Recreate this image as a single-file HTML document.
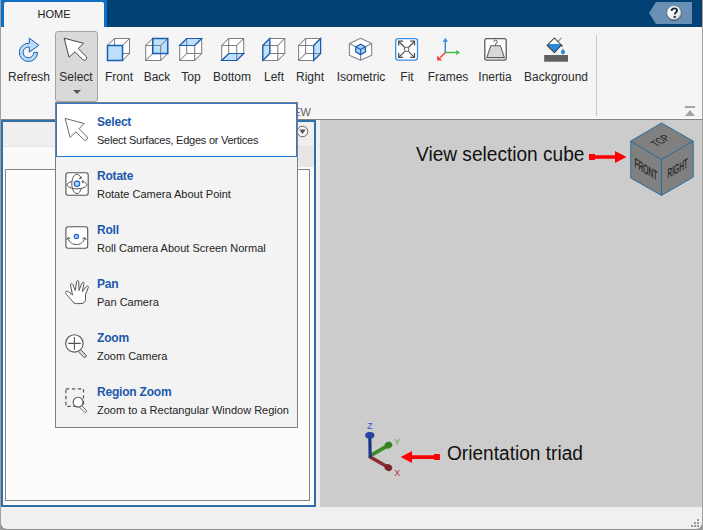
<!DOCTYPE html>
<html><head><meta charset="utf-8">
<style>
*{margin:0;padding:0;box-sizing:border-box}
html,body{width:703px;height:530px;overflow:hidden;background:#f0f0f0;font-family:"Liberation Sans",sans-serif}
.a{position:absolute}
.lbl{position:absolute;font-size:12px;line-height:14px;color:#2b2b2b;white-space:nowrap;text-align:center}
.mt{position:absolute;font-size:12px;font-weight:bold;color:#1c58ad;white-space:nowrap;line-height:14px;letter-spacing:-0.2px}
.md{position:absolute;font-size:11px;color:#242424;white-space:nowrap;line-height:13px}
svg{position:absolute;overflow:visible}
</style></head><body>
<!-- window frame -->
<div class="a" style="left:0;top:0;width:703px;height:530px;background:#f0f0f0"></div>
<!-- header -->
<div class="a" style="left:1px;top:0;width:701px;height:27px;background:#014174"></div>
<div class="a" style="left:1px;top:0;width:106px;height:27px;background:#0e6ec3"></div>
<div class="a" style="left:4px;top:2px;width:100px;height:25px;background:#f5f5f5;border-radius:2px 2px 0 0"></div>
<div class="lbl" style="left:4px;top:7px;width:100px;font-size:11px;color:#222">HOME</div>
<!-- help -->
<svg style="left:0;top:0" width="703" height="30">
  <polygon points="649,13 656,2 692,2 692,24 656,24" fill="#6a8fb4"/>
  <defs><radialGradient id="hg" cx="0.4" cy="0.3" r="0.75"><stop offset="0" stop-color="#ffffff"/><stop offset="0.6" stop-color="#f0f0f0"/><stop offset="1" stop-color="#c4c8cc"/></radialGradient>
  <linearGradient id="hs" x1="0" y1="0" x2="0" y2="1"><stop offset="0" stop-color="#6a8fb4"/><stop offset="0.45" stop-color="#5a6f88"/><stop offset="1" stop-color="#1e2c40"/></linearGradient></defs>
  <circle cx="674" cy="12.9" r="7.4" fill="url(#hg)" stroke="url(#hs)" stroke-width="0.9"/>
  <path d="M671.6,11.1 C671.6,9.2 672.8,8.4 674.3,8.4 C675.9,8.4 677,9.3 677,10.7 C677,12.4 674.7,12.6 674.7,14.6" stroke="#1c2a3e" stroke-width="1.9" fill="none"/>
  <rect x="673.6" y="15.9" width="2.2" height="1.9" fill="#1c2a3e"/>
</svg>
<!-- toolstrip -->
<div class="a" style="left:1px;top:27px;width:701px;height:92px;background:#f5f5f5"></div>
<div class="a" style="left:1px;top:118px;width:701px;height:1px;background:#fbfbfb"></div>
<div class="a" style="left:1px;top:119px;width:701px;height:1px;background:#808080"></div>
<div class="a" style="left:596px;top:35px;width:1px;height:81px;background:#c8c8c8"></div>
<!-- select button -->
<div class="a" style="left:55px;top:31px;width:43px;height:71px;background:#d9d9d9;border:1px solid #a3a3a3;border-radius:3px"></div>
<svg style="left:0;top:0" width="703" height="120">
  <polygon points="73,90 81,90 77,94" fill="#555"/>
</svg>
<!-- labels -->
<div class="lbl" style="left:4px;top:70px;width:50px">Refresh</div>
<div class="lbl" style="left:51px;top:70px;width:50px">Select</div>
<div class="lbl" style="left:94px;top:70px;width:50px">Front</div>
<div class="lbl" style="left:132px;top:70px;width:50px">Back</div>
<div class="lbl" style="left:166px;top:70px;width:50px">Top</div>
<div class="lbl" style="left:207px;top:70px;width:50px">Bottom</div>
<div class="lbl" style="left:249px;top:70px;width:50px">Left</div>
<div class="lbl" style="left:285px;top:70px;width:50px">Right</div>
<div class="lbl" style="left:331px;top:70px;width:60px">Isometric</div>
<div class="lbl" style="left:382px;top:70px;width:50px">Fit</div>
<div class="lbl" style="left:423px;top:70px;width:50px">Frames</div>
<div class="lbl" style="left:470px;top:70px;width:50px">Inertia</div>
<div class="lbl" style="left:516px;top:70px;width:80px">Background</div>
<div class="lbl" style="left:251px;top:105px;width:60px;font-size:11px;color:#5e5e5e;text-align:right">VIEW</div>
<!-- collapse -->
<div class="a" style="left:685px;top:106px;width:10px;height:2px;background:#a3a3a3"></div>
<svg style="left:0;top:0" width="703" height="120"><polygon points="685,116 695,116 690,110" fill="#a3a3a3"/></svg>

<!-- icons -->
<svg style="left:0;top:0" width="703" height="70" id="icons">
  <g transform="translate(107,38)"><polygon points="0.5,7.5 7.5,0.5 22.5,0.5 22.5,15.5 15.5,22.5 0.5,22.5" fill="#fff"/><path d="M0.5,7.5H15.5V22.5H0.5Z M7.5,0.5H22.5V15.5H7.5Z M0.5,7.5L7.5,0.5 M15.5,7.5L22.5,0.5 M15.5,22.5L22.5,15.5 M0.5,22.5L7.5,15.5" fill="none" stroke="#808080" stroke-width="1.05"/><polygon points="0.5,7.5 15.5,7.5 15.5,22.5 0.5,22.5" fill="#bde0fc" stroke="#1b5db5" stroke-width="1.5"/></g>
<g transform="translate(145.2,38)"><polygon points="0.5,7.5 7.5,0.5 22.5,0.5 22.5,15.5 15.5,22.5 0.5,22.5" fill="#fff"/><polygon points="7.5,0.5 22.5,0.5 22.5,15.5 7.5,15.5" fill="#bde0fc"/><path d="M0.5,7.5H15.5V22.5H0.5Z M7.5,0.5H22.5V15.5H7.5Z M0.5,7.5L7.5,0.5 M15.5,7.5L22.5,0.5 M15.5,22.5L22.5,15.5 M0.5,22.5L7.5,15.5" fill="none" stroke="#808080" stroke-width="1.05"/><polygon points="7.5,0.5 22.5,0.5 22.5,15.5 7.5,15.5" fill="none" stroke="#1b5db5" stroke-width="1.5"/></g>
<g transform="translate(179.2,38)"><polygon points="0.5,7.5 7.5,0.5 22.5,0.5 22.5,15.5 15.5,22.5 0.5,22.5" fill="#fff"/><polygon points="0.5,7.5 7.5,0.5 22.5,0.5 15.5,7.5" fill="#bde0fc"/><path d="M0.5,7.5H15.5V22.5H0.5Z M7.5,0.5H22.5V15.5H7.5Z M0.5,7.5L7.5,0.5 M15.5,7.5L22.5,0.5 M15.5,22.5L22.5,15.5 M0.5,22.5L7.5,15.5" fill="none" stroke="#808080" stroke-width="1.05"/><polygon points="0.5,7.5 7.5,0.5 22.5,0.5 15.5,7.5" fill="none" stroke="#1b5db5" stroke-width="1.2"/></g>
<g transform="translate(221.2,38)"><polygon points="0.5,7.5 7.5,0.5 22.5,0.5 22.5,15.5 15.5,22.5 0.5,22.5" fill="#fff"/><polygon points="0.5,22.5 7.5,15.5 22.5,15.5 15.5,22.5" fill="#bde0fc"/><path d="M0.5,7.5H15.5V22.5H0.5Z M7.5,0.5H22.5V15.5H7.5Z M0.5,7.5L7.5,0.5 M15.5,7.5L22.5,0.5 M15.5,22.5L22.5,15.5 M0.5,22.5L7.5,15.5" fill="none" stroke="#808080" stroke-width="1.05"/><polygon points="0.5,22.5 7.5,15.5 22.5,15.5 15.5,22.5" fill="none" stroke="#1b5db5" stroke-width="1.2"/></g>
<g transform="translate(262.3,38)"><polygon points="0.5,7.5 7.5,0.5 22.5,0.5 22.5,15.5 15.5,22.5 0.5,22.5" fill="#fff"/><polygon points="0.5,7.5 7.5,0.5 7.5,15.5 0.5,22.5" fill="#bde0fc"/><path d="M0.5,7.5H15.5V22.5H0.5Z M7.5,0.5H22.5V15.5H7.5Z M0.5,7.5L7.5,0.5 M15.5,7.5L22.5,0.5 M15.5,22.5L22.5,15.5 M0.5,22.5L7.5,15.5" fill="none" stroke="#808080" stroke-width="1.05"/><polygon points="0.5,7.5 7.5,0.5 7.5,15.5 0.5,22.5" fill="none" stroke="#1b5db5" stroke-width="1.2"/></g>
<g transform="translate(298.1,38)"><polygon points="0.5,7.5 7.5,0.5 22.5,0.5 22.5,15.5 15.5,22.5 0.5,22.5" fill="#fff"/><polygon points="15.5,7.5 22.5,0.5 22.5,15.5 15.5,22.5" fill="#bde0fc"/><path d="M0.5,7.5H15.5V22.5H0.5Z M7.5,0.5H22.5V15.5H7.5Z M0.5,7.5L7.5,0.5 M15.5,7.5L22.5,0.5 M15.5,22.5L22.5,15.5 M0.5,22.5L7.5,15.5" fill="none" stroke="#808080" stroke-width="1.05"/><polygon points="15.5,7.5 22.5,0.5 22.5,15.5 15.5,22.5" fill="none" stroke="#1b5db5" stroke-width="1.2"/></g>
  <!-- isometric -->
  <polygon points="360.6,38.2 371.7,43.5 371.7,55.2 360.6,60.3 349.4,55.2 349.4,43.5" fill="#fff" stroke="#7f8791" stroke-width="1.1" stroke-linejoin="round"/>
  <path d="M349.4,43.5L355.8,46.8 M371.7,43.5L365.4,46.8 M360.6,54.6V60.3" stroke="#7f8791" stroke-width="1.1"/>
  <polygon points="360.6,44.2 365.4,46.8 365.4,52 360.6,54.6 355.8,52 355.8,46.8" fill="#a9d3fa" stroke="#1b5db5" stroke-width="1.3" stroke-linejoin="round"/>
  <path d="M360.6,49.4L355.8,46.8 M360.6,49.4L365.4,46.8 M360.6,49.4V54.6" stroke="#1b5db5" stroke-width="1.1"/>
  <!-- fit -->
  <rect x="395.7" y="38.6" width="21.8" height="21.6" rx="2.6" fill="#fff" stroke="#3b8fe2" stroke-width="1.3"/>
  <rect x="404.6" y="47.3" width="4" height="4" fill="none" stroke="#6a6a6a" stroke-width="1"/>
  <path d="M404.3,47L399.3,42 M408.9,47L413.9,42 M404.3,51.8L399.3,56.8 M408.9,51.8L413.9,56.8" stroke="#4d4d4d" stroke-width="1.1"/>
  <path d="M398.7,45.6V41.2H403 M410.2,41.2H414.5V45.6 M398.7,53V57.4H403 M410.2,57.4H414.5V53" fill="none" stroke="#4d4d4d" stroke-width="1.3"/>
  <!-- frames -->
  <path d="M445.3,52.5V41.5 M445.3,52.5H456.3 M445.3,52.5L440,57.8" stroke-width="1.3" fill="none"/>
  <path d="M445.3,52.5V41.5" stroke="#2e86de" stroke-width="1.4"/>
  <polygon points="442.7,41.8 448,41.8 445.35,38" fill="#2e86de"/>
  <path d="M445.3,52.5H456.3" stroke="#3dbb3d" stroke-width="1.4"/>
  <polygon points="456.2,50 456.2,55 460,52.5" fill="#3dbb3d"/>
  <path d="M445.3,52.5L440,57.8" stroke="#ff3b30" stroke-width="1.4"/>
  <polygon points="437.2,55.6 437.2,60.6 442.2,60.6" fill="#ff3b30"/>
  <!-- inertia -->
  <rect x="484.8" y="38.6" width="21.4" height="21.5" rx="2" fill="#fff" stroke="#5c5c5c" stroke-width="1.3"/>
  <polygon points="490.8,45.7 500.4,45.7 504.4,57.6 486.8,57.6" fill="#d8d8d8" stroke="#5c5c5c" stroke-width="1.05" stroke-linejoin="round"/>
  <path d="M495.6,45.7V43.6 A1.7,1.7 0 1 0 493.9,41.9" fill="none" stroke="#5c5c5c" stroke-width="1"/>
  <!-- background -->
  <defs><clipPath id="bk"><polygon points="554.4,38 561.7,45.3 554.4,52.6 547.1,45.3"/></clipPath></defs>
  <polygon points="554.4,38 561.7,45.3 554.4,52.6 547.1,45.3" fill="#fff"/>
  <rect x="545" y="44" width="18" height="10" fill="#2b88da" clip-path="url(#bk)"/>
  <polygon points="554.4,38 562.4,46 560.4,46 554.4,52.6 547.1,45.3" fill="none" stroke="#3a3a3a" stroke-width="1.05" stroke-linejoin="round"/>
  <path d="M557.4,42L561.6,37.9" stroke="#555" stroke-width="1"/>
  <path d="M563,48.6 C562.6,49.6 560.9,51.2 560.9,52.3 A2.1,2.1 0 0 0 565.1,52.3 C565.1,51.2 563.4,49.6 563,48.6Z" fill="#2b88da"/>
  <rect x="544.2" y="55" width="23.8" height="6.7" fill="#606060"/>

  <!-- refresh -->
  <path d="M29.3,38.2 L38.9,45.3 L29.3,52.1 L29.3,47.07 A5.4,5.4 0 1 0 33.85,52.4 L37.55,52.4 A9.1,9.1 0 1 1 29.3,43.34 Z" fill="#b9dcfb" stroke="#1f5fb5" stroke-width="1" stroke-linejoin="round"/>
  <!-- select arrow -->
  <path d="M64.2,38.2 L83.5,43.3 L78.2,48.6 L86.3,56.7 A2.3,2.3 0 0 1 83.1,59.9 L75,51.8 L69,57.2 Z" fill="#fff" stroke="#444" stroke-width="1" stroke-linejoin="round"/>
</svg>

<!-- left panel -->
<div class="a" style="left:1px;top:120px;width:315px;height:387px;border:2px solid #2e6fa9;background:#fafafa"></div>
<div class="a" style="left:3px;top:122px;width:311px;height:24px;background:#efefef"></div>
<div class="a" style="left:3px;top:146px;width:311px;height:1px;background:#e3e3e3"></div>
<div class="a" style="left:297px;top:147px;width:17px;height:20px;background:#e6e6e6"></div>
<div class="a" style="left:5px;top:169px;width:305px;height:332px;border:1px solid #80848c;background:#fcfcfc"></div>
<svg style="left:0;top:0" width="320" height="140"><circle cx="302.5" cy="131.5" r="5.3" fill="#f2f2f2" stroke="#555" stroke-width="0.9"/><polygon points="299.3,129.5 305.7,129.5 302.5,134" fill="#555"/></svg>

<!-- viewport -->
<div class="a" style="left:320px;top:120px;width:382px;height:387px;background:#cccccc"></div>
<div class="a" style="left:0;top:522px;width:8px;height:8px;background:#9c9c9c"></div>
<div class="a" style="left:695px;top:522px;width:8px;height:8px;background:#9c9c9c"></div>
<div class="a" style="left:0;top:507px;width:703px;height:23px;background:#f0f0f0;border:1px solid #8f8f8f;border-top:none;border-radius:0 0 7px 7px"></div>
<div class="a" style="left:0;top:0;width:1px;height:530px;background:#a0a0a0"></div>
<div class="a" style="left:702px;top:0;width:1px;height:530px;background:#a0a0a0"></div>


<svg style="left:0;top:0" width="703" height="530">
  <polygon points="661.5,123 693.2,141.1 693.2,177.2 661.5,195.4 630.7,178 630.7,141.1" fill="#808080" stroke="#1f6a9c" stroke-width="0.9" stroke-linejoin="round"/>
  <path d="M630.7,141.1 L661.3,159.5 L693.2,141.1 M661.3,159.5 L661.5,195.4" fill="none" stroke="#1f6a9c" stroke-width="0.9"/>
  <g transform="matrix(0.86,0.52,0,1,634.5,166.8)"><text x="0" y="0" font-family="Liberation Sans" font-size="13" textLength="26.5" lengthAdjust="spacingAndGlyphs" fill="#1a1a1a" stroke="#1a1a1a" stroke-width="0.25">FRONT</text></g>
  <g transform="matrix(0.866,-0.5,0,1,667.5,178.6)"><text x="0" y="0" font-family="Liberation Sans" font-size="13" textLength="23.5" lengthAdjust="spacingAndGlyphs" fill="#1a1a1a" stroke="#1a1a1a" stroke-width="0.25">RIGHT</text></g>
  <g transform="matrix(0.866,-0.5,0.86,0.52,664,142.8)"><text x="0" y="0" font-family="Liberation Sans" font-size="12" textLength="16.5" lengthAdjust="spacingAndGlyphs" text-anchor="middle" fill="#1e1e1e">TOP</text></g>
  <!-- arrows -->
  <polygon points="589,154.1 595,154.1 595,155.2 615,155.2 615,151.1 626.5,157 615,163 615,158.8 595,158.8 595,160 589,160" fill="#ff0000"/>
  <polygon points="439.9,453.9 434,453.9 434,455.2 412,455.2 412,450.9 400.7,456.9 412,462.9 412,459 434,459 434,460 439.9,460" fill="#ff0000"/>
  <!-- triad -->
  <path d="M370.3,457 L387.6,467" stroke="#8a2d2f" stroke-width="3.6" stroke-linecap="round"/>
  <ellipse cx="388.4" cy="467.6" rx="3.8" ry="3.4" fill="#7a2426" transform="rotate(30 388.4 467.6)"/>
  <path d="M371,455.3 L387.3,445.8" stroke="#3d8a28" stroke-width="3.8" stroke-linecap="round"/>
  <ellipse cx="388.4" cy="445.1" rx="3.9" ry="3.4" fill="#397f23" transform="rotate(-30 388.4 445.1)"/>
  <path d="M370.2,457.5 L369.8,435.5" stroke="#1c3486" stroke-width="3.2"/>
  <ellipse cx="369.8" cy="435.3" rx="4.6" ry="3.4" fill="#2444a0"/>
  <text x="369.8" y="429" font-family="Liberation Sans" font-size="9" fill="#3358c8" text-anchor="middle">Z</text>
  <text x="397.3" y="444.5" font-family="Liberation Sans" font-size="9" fill="#5cb043" text-anchor="middle">Y</text>
  <text x="397.3" y="476.3" font-family="Liberation Sans" font-size="9" fill="#b53a3a" text-anchor="middle">X</text>
  <!-- grip -->
  <g fill="#9a9a9a"><rect x="697" y="519" width="2" height="2"/><rect x="694" y="522" width="2" height="2"/><rect x="697" y="522" width="2" height="2"/><rect x="691" y="525" width="2" height="2"/><rect x="694" y="525" width="2" height="2"/><rect x="697" y="525" width="2" height="2"/></g>
</svg>

<!-- annotations -->
<div class="a" style="left:416px;top:143px;font-size:20px;line-height:22px;color:#111;white-space:nowrap;transform:scaleX(0.955);transform-origin:0 0">View selection cube</div>
<div class="a" style="left:446.5px;top:442px;font-size:20px;line-height:22px;color:#111;white-space:nowrap;transform:scaleX(0.955);transform-origin:0 0">Orientation triad</div>

<!-- menu -->
<div class="a" style="left:55px;top:102px;width:243px;height:326px;background:#f3f3f3;border:1px solid #7f7f7f"></div>
<div class="a" style="left:56px;top:103px;width:241px;height:54px;background:#fff;border:1px solid #2a7ad1"></div>
<div class="mt" style="left:97px;top:115px">Select</div>
<div class="md" style="left:97px;top:134px;letter-spacing:-0.24px">Select Surfaces, Edges or Vertices</div>
<div class="mt" style="left:97px;top:169px">Rotate</div>
<div class="md" style="left:97px;top:188px">Rotate Camera About Point</div>
<div class="mt" style="left:97px;top:223px">Roll</div>
<div class="md" style="left:97px;top:242px">Roll Camera About Screen Normal</div>
<div class="mt" style="left:97px;top:277px">Pan</div>
<div class="md" style="left:97px;top:296px">Pan Camera</div>
<div class="mt" style="left:97px;top:331px">Zoom</div>
<div class="md" style="left:97px;top:350px">Zoom Camera</div>
<div class="mt" style="left:97px;top:385px">Region Zoom</div>
<div class="md" style="left:97px;top:404px">Zoom to a Rectangular Window Region</div>

<svg style="left:0;top:0" width="703" height="530">
  <!-- select arrow -->
  <path d="M65.1,118.4 L84.2,123.5 L79,128.7 L87,136.7 A2.2,2.2 0 0 1 83.9,139.8 L75.9,131.8 L70.1,137.4 Z" fill="#fff" stroke="#5a5a5a" stroke-width="0.9" stroke-linejoin="round"/>
  <!-- rotate -->
  <rect x="65.9" y="172.7" width="22.3" height="22.6" rx="2.2" fill="#fff" stroke="#555" stroke-width="1.1"/>
  <path d="M72.3,181.3 C69,182.2 67.1,183.4 67.1,184.7 C67.1,187 71.5,188.8 77,188.8 C82.5,188.8 86.9,187 86.9,184.7 C86.9,183.4 85.2,182.2 82.4,181.4" fill="none" stroke="#444" stroke-width="0.9"/>
  <path d="M80.9,178.3 C80,175.5 78.5,174.2 77,174.2 C73.8,174.2 71.8,179 71.8,184 C71.8,189.3 74.2,193.6 77,193.6 C79.2,193.6 80.6,191 81.1,188.6" fill="none" stroke="#444" stroke-width="0.9"/>
  <path d="M78.9,178.5 L80.9,178.6 L81.6,176.6 M83.6,179.9 L81.9,181.6 L83.2,183.2" fill="none" stroke="#444" stroke-width="0.9"/>
  <circle cx="77" cy="183.8" r="2.7" fill="#b5dbfb" stroke="#1f62c0" stroke-width="1.2"/>
  <!-- roll -->
  <rect x="65.9" y="226.7" width="21.8" height="21.5" rx="2.2" fill="#fff" stroke="#555" stroke-width="1.1"/>
  <circle cx="76.4" cy="236.4" r="2.1" fill="#b5dbfb" stroke="#1f62c0" stroke-width="1.2"/>
  <path d="M67.8,238.2 C69.5,242.5 72.8,244.6 76.4,244.6 C80,244.6 83.3,242.5 85,238.2" fill="none" stroke="#444" stroke-width="0.9"/>
  <path d="M66.6,240 L67.8,237.6 L70.4,238.8 M86.2,240 L85,237.6 L82.4,238.8" fill="none" stroke="#444" stroke-width="0.9"/>
  <!-- pan -->
  <path d="M74,303 C71,300 69,297 66.5,294.5 C65,293 65.5,291 67,291.3 C68.5,291.6 70.5,293 72.5,295 L70.5,285 C70.3,283.5 72.3,283 72.8,284.5 L75.3,290.5 L76.6,281.5 C76.8,280.3 78.6,280.3 78.7,281.5 L79,290.5 L82,283 C82.5,281.8 84.3,282.3 84,283.5 L82.3,291.5 L86.5,286.5 C87.3,285.5 88.7,286.3 88.3,287.5 L85.5,294.5 L85.5,299.5 C85.5,302 83.5,303.6 81,303.6 L76.5,303.6 C75.5,303.6 74.7,303.5 74,303 Z" fill="#fff" stroke="#555" stroke-width="1" stroke-linejoin="round"/>
  <!-- zoom -->
  <path d="M80.6,349.6 L86,355 A1.6,1.6 0 0 1 83.8,357.2 L78.4,351.8" fill="#d8d8d8" stroke="#555" stroke-width="1"/>
  <circle cx="74.4" cy="343.4" r="8.7" fill="#fff" stroke="#555" stroke-width="1.1"/>
  <path d="M68.2,343.4H80.8 M74.4,337V349.7" stroke="#555" stroke-width="1.1"/>
  <!-- region zoom -->
  <rect x="65.9" y="388.8" width="17.6" height="17.6" fill="none" stroke="#555" stroke-width="1.2" stroke-dasharray="3.4,2.6"/>
  <path d="M81.6,405.6 L86.4,410.4 A1.3,1.3 0 0 1 84.6,412.2 L79.8,407.4" fill="#fff" stroke="#555" stroke-width="0.9"/>
  <circle cx="78.1" cy="402.2" r="4.9" fill="#fff" stroke="#555" stroke-width="1.1"/>
</svg>
</body></html>
